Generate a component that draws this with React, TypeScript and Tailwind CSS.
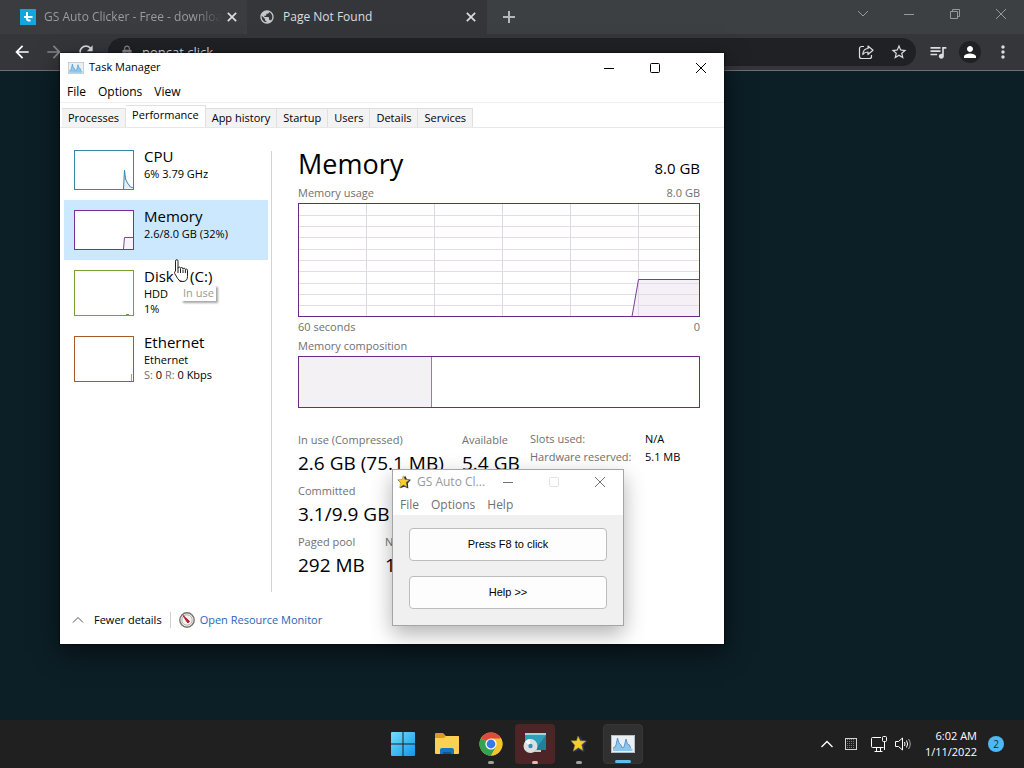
import React, { useState } from "react";
import {
  MdArrowBack,
  MdArrowForward,
  MdLock,
  MdMoreVert,
  MdPerson,
  MdPublic,
  MdQueueMusic,
  MdRefresh,
  MdStarBorder,
} from "react-icons/md";

const tabs = [
  "Processes",
  "Performance",
  "App history",
  "Startup",
  "Users",
  "Details",
  "Services",
];

const CloseIcon = ({ className }: { className?: string }) => (
  <svg className={className} viewBox="0 0 12 12" fill="none" stroke="currentColor">
    <path d="M1 1l10 10M11 1L1 11" />
  </svg>
);

const MinimizeIcon = ({ className }: { className?: string }) => (
  <svg className={className} viewBox="0 0 12 12" fill="none" stroke="currentColor">
    <path d="M1 6.5h10" />
  </svg>
);

const MaximizeIcon = ({ className }: { className?: string }) => (
  <svg className={className} viewBox="0 0 12 12" fill="none" stroke="currentColor">
    <rect x="1.5" y="1.5" width="9" height="9" rx="1" />
  </svg>
);

const StarIcon = ({ className }: { className?: string }) => (
  <svg className={className} viewBox="0 0 18 18">
    <path
      d="M10.500 1l2.200 4 5.300 1-4 4.500.5 7-5-2.500L4 17l1.500-6L1 6.500 6.500 6z"
      fill="#26305c"
    />
    <path
      d="M8 1l2.300 4.700 5.700.3-4.300 3.700 1.200 5.800-4.500-2.700-5.200 3.400 1.600-5.900L1 5.800l5.500-.1z"
      fill="#f6cf2a"
      stroke="#8a7a3c"
      strokeWidth=".5"
    />
  </svg>
);

const TaskManagerIcon = ({ className }: { className?: string }) => (
  <svg className={className} viewBox="0 0 24 20">
    <rect x=".5" y="1.500" width="23" height="17" fill="#e9eff3" stroke="#b3c0ca" />
    <path
      d="M2 17v-3l2-1 1-2 1.500-7 1.500 5 2 2 1 3 2-1 2-8 1.500 5 2 1 1 3 2 1v2z"
      fill="#8cc6ea"
    />
    <path
      d="M2 14l2-1 1-2 1.500-7 1.500 5 2 2 1 3 2-1 2-8 1.500 5 2 1 1 3"
      fill="none"
      stroke="#4189bd"
      strokeWidth=".8"
    />
  </svg>
);

const BrowserWindow = () => (
  <header className="text-[#dcdde0]">
    <div className="flex h-[34px] items-center bg-[#3c4043]">
      <div className="flex h-full w-[247px] items-center rounded-br-lg bg-[#3a3c3f] pl-5 pr-[10px]">
        <svg className="mr-2 h-4 w-4 shrink-0" viewBox="0 0 16 16">
          <rect width="16" height="16" fill="#14a5dd" />
          <path
            d="M7 3v6.500q0 2 2 2h1.500M4 8h8.500"
            fill="none"
            stroke="#fff"
            strokeWidth="2"
          />
        </svg>
        <span className="whitespace-nowrap text-xs text-[#989b9f] [mask-image:linear-gradient(to_right,black_85%,transparent)]">
          GS Auto Clicker - Free - downloa
        </span>
        <button aria-label="Close tab" className="ml-auto">
          <CloseIcon className="h-[10px] w-[10px] stroke-2" />
        </button>
      </div>
      <div className="flex h-full w-[240px] items-center bg-[#35363a] pl-3 pr-[11px]">
        <MdPublic className="mr-2 h-4 w-4 text-[#c4c7ca]" />
        <span className="whitespace-nowrap text-xs">Page Not Found</span>
        <button aria-label="Close tab" className="ml-auto">
          <CloseIcon className="h-[10px] w-[10px] stroke-2" />
        </button>
      </div>
      <button aria-label="New tab" className="ml-4 text-[#b5b8bb]">
        <svg className="h-3 w-3" viewBox="0 0 12 12" stroke="currentColor" strokeWidth="2">
          <path d="M6 0v12M0 6h12" />
        </svg>
      </button>
      <div className="ml-auto flex items-center gap-[34px] pb-[6px] pr-[17px] text-[#97999b]">
        <button aria-label="Search tabs">
          <svg className="h-3 w-3" viewBox="0 0 12 12" fill="none" stroke="currentColor">
            <path d="M1 3l5 5 5-5" />
          </svg>
        </button>
        <button aria-label="Minimize">
          <MinimizeIcon className="h-3 w-3" />
        </button>
        <button aria-label="Restore">
          <svg className="h-3 w-3" viewBox="0 0 12 12" fill="none" stroke="currentColor">
            <path d="M1.500 3.500h7v7h-7zM3.500 3.500v-2h7v7h-2" />
          </svg>
        </button>
        <button aria-label="Close">
          <CloseIcon className="h-3 w-3" />
        </button>
      </div>
    </div>
    <div className="flex h-[37px] items-center border-b border-[#6d7174] bg-[#35363a] pl-3">
      <button aria-label="Back" className="text-white">
        <MdArrowBack className="h-5 w-5" />
      </button>
      <button aria-label="Forward" className="ml-3 text-[#85878a]">
        <MdArrowForward className="h-5 w-5" />
      </button>
      <button aria-label="Reload" className="ml-3">
        <MdRefresh className="h-5 w-5" />
      </button>
      <div className="ml-3 flex h-7 flex-1 items-center rounded-full bg-[#202124] pl-3 pr-2">
        <MdLock className="h-[14px] w-[14px] text-[#85878a]" />
        <input
          aria-label="Address"
          defaultValue="popcat.click"
          className="ml-2 min-w-0 flex-1 bg-transparent text-[13px] leading-5 outline-none"
        />
        <button aria-label="Share" className="mr-4">
          <svg
            className="h-4 w-4"
            viewBox="0 0 16 16"
            fill="none"
            stroke="currentColor"
            strokeWidth="1.2"
            strokeLinejoin="round"
          >
            <path d="M6 2.500H3.500a2 2 0 0 0-2 2v8a2 2 0 0 0 2 2h8a2 2 0 0 0 2-2V11" />
            <path d="M10 2l5 4.300-5 4.200V8c-2.500 0-4 .8-5.200 2.500C5 7 7 4.700 10 4.500z" />
          </svg>
        </button>
        <button aria-label="Bookmark">
          <MdStarBorder className="h-[18px] w-[18px]" />
        </button>
      </div>
      <button aria-label="Media" className="ml-3">
        <MdQueueMusic className="h-5 w-5" />
      </button>
      <button aria-label="Profile" className="ml-[11px] rounded-full bg-[#202124] p-[2px] text-white">
        <MdPerson className="h-[18px] w-[18px]" />
      </button>
      <button aria-label="Menu" className="ml-3 mr-[11px]">
        <MdMoreVert className="h-5 w-5" />
      </button>
    </div>
  </header>
);

type ResourceProps = {
  name: string;
  color: string;
  tall?: boolean;
  selected?: boolean;
  graph: React.ReactNode;
  children: React.ReactNode;
};

const Resource = ({ name, color, tall, selected, graph, children }: ResourceProps) => (
  <button
    className={`flex w-full gap-[10px] px-[10px] pb-[10px] pt-[6px] text-left ${
      selected ? "bg-[#cce8ff]" : ""
    }`}
  >
    <span className={`mt-1 w-[60px] shrink-0 border bg-white ${tall ? "h-[46px]" : "h-10"} ${color}`}>
      <svg className="h-full w-full" viewBox={tall ? "0 0 58 44" : "0 0 58 38"}>
        {graph}
      </svg>
    </span>
    <span className="-mb-2 block whitespace-nowrap text-[11px] leading-[15px]">
      <span className="block text-[15px] leading-5">{name}</span>
      {children}
    </span>
  </button>
);

const MemoryChart = () => (
  <svg className="block h-[114px] w-full" viewBox="0 0 402 114" preserveAspectRatio="none">
    <path d="M334 113.500L340.500 76.500H402V113.500z" fill="#f4f0f6" />
    {[68, 136, 204, 272, 340].map((x) => (
      <path key={x} d={`M${x}.5 0V114`} stroke="#dfd8e3" />
    ))}
    {[12, 23, 34, 46, 57, 68, 80, 91, 102].map((y) => (
      <path key={y} d={`M0 ${y}.5H402`} stroke="#e3dce6" />
    ))}
    <path d="M334 113.500L340.500 76.500H402" fill="none" stroke="#793f98" />
    <rect x=".5" y=".5" width="401" height="113" fill="none" stroke="#6b2a86" />
  </svg>
);

const Stat = ({ label, value }: { label: string; value: string }) => (
  <div className="whitespace-nowrap">
    <dt className="leading-5 text-[#707070]">{label}</dt>
    <dd className="text-[19px] leading-[26px]">{value}</dd>
  </div>
);

const TaskManager = () => {
  const [active, setActive] = useState("Performance");

  return (
    <section className="absolute left-[60px] top-[53px] w-[664px] bg-white text-[11px] text-black shadow-[0_0_2px_#000,0_8px_24px_rgba(0,0,0,0.5)]">
      <div className="flex h-[29px] items-center pl-2 pr-[17px]">
        <TaskManagerIcon className="mr-[5px] h-[14px] w-4" />
        <h1>Task Manager</h1>
        <div className="ml-auto flex gap-[34px]">
          <button aria-label="Minimize">
            <MinimizeIcon className="h-3 w-3" />
          </button>
          <button aria-label="Maximize">
            <MaximizeIcon className="h-3 w-3" />
          </button>
          <button aria-label="Close">
            <CloseIcon className="h-3 w-3" />
          </button>
        </div>
      </div>
      <nav className="flex h-[21px] items-center gap-3 border-b border-[#f0f0f0] px-[7px] text-xs">
        <button>File</button>
        <button>Options</button>
        <button>View</button>
      </nav>
      <div className="flex h-[25px] items-end border-b border-[#e8e8e8] px-[2px]">
        {tabs.map((tab) => (
          <button
            key={tab}
            onClick={() => setActive(tab)}
            className={`border-r border-t border-[#e0e0e0] px-[6px] ${
              active === tab ? "h-[22px] bg-white pb-[3px]" : "h-[19px] bg-[#f3f3f3]"
            }`}
          >
            {tab}
          </button>
        ))}
      </div>

      <div className="flex">
        <aside className="mb-[13px] ml-1 mt-3 w-[204px]">
          <Resource
            name="CPU"
            color="border-[#3587a8]"
            graph={
              <path
                d="M48.500 38l1-19 1 9 2 4 3 4 3 1"
                fill="#e2f1f8"
                stroke="#3587a8"
              />
            }
          >
            6% 3.79 GHz
          </Resource>
          <Resource
            name="Memory"
            color="border-[#7b2f9b]"
            selected
            graph={<path d="M48.500 38l1-11.500H59V38" fill="#f8f3fa" stroke="#7b4a91" />}
          >
            2.6/8.0 GB (32%)
          </Resource>
          <Resource
            name="Disk 0 (C:)"
            color="border-[#76a02f]"
            tall
            graph={<path d="M51 43.500h3" stroke="#76a02f" />}
          >
            <span className="block">HDD</span>
            <span className="block">1%</span>
          </Resource>
          <Resource
            name="Ethernet"
            color="border-[#a75a27]"
            tall
            graph={<path d="M56.500 44v-7" stroke="#e08a6a" />}
          >
            <span className="block">Ethernet</span>
            <span className="block">
              <span className="text-[#707070]">S:</span> 0 <span className="text-[#707070]">R:</span> 0
              Kbps
            </span>
          </Resource>
        </aside>

        <main className="mb-1 ml-[3px] mt-[23px] flex h-[441px] flex-1 flex-col border-l border-[#d4d4d4] pl-[26px] pr-6">
          <div className="-mt-[5px] flex h-9 items-center justify-between">
            <h2 className="text-[27px] leading-9">Memory</h2>
            <span className="pt-2 text-[15px]">8.0 GB</span>
          </div>
          <div className="flex justify-between leading-[21px] text-[#707070]">
            <span>Memory usage</span>
            <span>8.0 GB</span>
          </div>
          <MemoryChart />
          <div className="flex justify-between leading-[19px] text-[#707070]">
            <span>60 seconds</span>
            <span>0</span>
          </div>
          <span className="leading-5 text-[#707070]">Memory composition</span>
          <div className="h-[52px] border border-[#6b2a86]">
            <div className="h-full w-1/3 border-r border-[#ab6fb0] bg-[#f4f1f5]"></div>
          </div>
          <div className="mt-[22px] flex">
            <dl className="w-[232px] shrink-0 space-y-[5px]">
              <div className="flex">
                <div className="w-[164px] shrink-0">
                  <Stat label="In use (Compressed)" value="2.6 GB (75.1 MB)" />
                </div>
                <Stat label="Available" value="5.4 GB" />
              </div>
              <Stat label="Committed" value="3.1/9.9 GB" />
              <div className="flex gap-5">
                <Stat label="Paged pool" value="292 MB" />
                <Stat label="Non-paged pool" value="1" />
              </div>
            </dl>
            <dl className="grid grid-cols-[115px_auto] content-start whitespace-nowrap leading-[18px]">
              <dt className="text-[#707070]">Slots used:</dt>
              <dd>N/A</dd>
              <dt className="text-[#707070]">Hardware reserved:</dt>
              <dd>5.1 MB</dd>
            </dl>
          </div>
        </main>
      </div>

      <footer className="flex h-12 items-center px-3">
        <button className="flex items-center gap-[10px] border-r border-[#d0d0d0] pr-2">
          <svg className="h-3 w-3" viewBox="0 0 12 12" fill="none" stroke="#555">
            <path d="M1 8.500l5-5 5 5" />
          </svg>
          Fewer details
        </button>
        <a href="#" className="ml-2 flex items-center gap-[5px] text-[#1f66b8]">
          <svg className="h-4 w-4" viewBox="0 0 16 16">
            <circle cx="8" cy="8" r="7.200" fill="#f4f2ef" stroke="#77736f" strokeWidth="1.400" />
            <circle cx="8" cy="8" r="5.200" fill="none" stroke="#b8b3ae" />
            <path d="M4 3.500l6.500 5.800-1.700 1.700z" fill="#b3202a" stroke="#b3202a" />
          </svg>
          Open Resource Monitor
        </a>
      </footer>
    </section>
  );
};

const AutoClicker = () => (
  <section className="absolute left-[392px] top-[469px] w-[232px] border border-[#a5a5a5] bg-[#f0f0f0] text-xs text-[#707070] shadow-[0_8px_20px_rgba(0,0,0,0.3)]">
    <div className="flex h-6 items-center bg-white pl-1 pr-[17px]">
      <StarIcon className="mr-[6px] h-[14px] w-[14px] shrink-0" />
      <h1 className="whitespace-nowrap text-[#999]">GS Auto Cl...</h1>
      <div className="ml-auto flex gap-[34px]">
        <button aria-label="Minimize">
          <MinimizeIcon className="h-3 w-3" />
        </button>
        <button aria-label="Maximize" className="text-[#e2e2e2]">
          <MaximizeIcon className="h-3 w-3" />
        </button>
        <button aria-label="Close">
          <CloseIcon className="h-3 w-3" />
        </button>
      </div>
    </div>
    <nav className="flex h-[21px] items-center gap-3 bg-white px-[7px]">
      <button>File</button>
      <button>Options</button>
      <button>Help</button>
    </nav>
    <div className="flex flex-col gap-[15px] p-4 pt-[13px] font-['Liberation_Sans',sans-serif] text-[11px] text-black">
      <button className="h-[33px] rounded border border-[#bdbdbd] bg-[#fdfdfd]">
        Press F8 to click
      </button>
      <button className="h-[33px] rounded border border-[#bdbdbd] bg-[#fdfdfd]">Help &gt;&gt;</button>
    </div>
  </section>
);

const Taskbar = () => (
  <footer className="grid h-12 grid-cols-[1fr_auto_1fr] items-center bg-[#202020] text-[11px] text-white">
    <div></div>
    <div className="flex gap-1 pl-[2px]">
      <button aria-label="Start" className="flex h-10 w-10 items-center justify-center">
        <svg className="h-6 w-6" viewBox="0 0 24 24">
          <defs>
            <linearGradient id="start" x1="0" y1="0" x2="1" y2="1">
              <stop offset="0" stopColor="#6fe0fb" />
              <stop offset="1" stopColor="#1595ec" />
            </linearGradient>
          </defs>
          <path
            d="M0 1q0-1 1-1h10.500v11.500H0zM12.500 0H23q1 0 1 1v10.500H12.500zM0 12.500h11.500V24H1q-1 0-1-1zM12.500 12.500H24V23q0 1-1 1H12.500z"
            fill="url(#start)"
          />
        </svg>
      </button>
      <button aria-label="File Explorer" className="flex h-10 w-10 items-center justify-center">
        <svg className="h-6 w-6" viewBox="0 0 24 24">
          <path d="M0 2q0-1 1-1h7l3 3h12q1 0 1 1v6H0z" fill="#d99e19" />
          <path d="M0 6h9l2-2h12q1 0 1 1v16q0 1-1 1H1q-1 0-1-1z" fill="#fbd153" />
          <path d="M5 22v-4q0-2 2-2h10q2 0 2 2v4z" fill="#1676c5" />
          <path d="M8 22v-2h8v2z" fill="#0e5799" />
        </svg>
      </button>
      <button aria-label="Chrome" className="flex h-10 w-10 flex-col items-center justify-between pt-2">
        <svg className="h-6 w-6 shrink-0" viewBox="0 0 24 24">
          <circle cx="12" cy="12" r="11.500" fill="#f4c42f" />
          <path d="M12 12L2.040 6.250a11.500 11.500 0 0 1 19.920 0z" fill="#e2493b" />
          <path d="M2.040 6.250A11.500 11.500 0 0 0 12 23.500l5-8.600-5-2.900z" fill="#35a252" />
          <path d="M12 6.500h10.100a11.500 11.500 0 0 1-10.100 17l5-8.600z" fill="#f4c42f" />
          <circle cx="12" cy="12" r="5.600" fill="#fff" />
          <circle cx="12" cy="12" r="4.400" fill="#3979e4" />
        </svg>
        <span className="h-[3px] w-[6px] rounded-full bg-[#a0a0a0]"></span>
      </button>
      <button
        aria-label="Installer"
        className="flex h-10 w-10 flex-col items-center justify-between rounded bg-[#4d2526] pt-2"
      >
        <svg className="h-6 w-6 shrink-0" viewBox="0 0 24 24">
          <rect x="2" y="1" width="21" height="17" fill="#2d9fb8" />
          <path d="M2 1h21v2H2z" fill="#98d9e6" />
          <path d="M23 3v15H12z" fill="#20809c" />
          <circle cx="7.500" cy="14" r="7" fill="#dbe0e3" />
          <path d="M7.500 14L2 9.700A7 7 0 0 1 7 7z" fill="#fff" />
          <circle cx="7.500" cy="14" r="2.200" fill="#3c91ad" />
          <path d="M12 18h6v2h-7z" fill="#c5ced3" />
        </svg>
        <span className="h-[3px] w-[6px] rounded-full bg-[#f5b0b0]"></span>
      </button>
      <button aria-label="GS Auto Clicker" className="flex h-10 w-10 flex-col items-center justify-between pt-[11px]">
        <StarIcon className="h-[18px] w-[18px] shrink-0" />
        <span className="h-[3px] w-[6px] rounded-full bg-[#a0a0a0]"></span>
      </button>
      <button
        aria-label="Task Manager"
        className="flex h-10 w-10 flex-col items-center justify-between rounded border border-[#373737] bg-[#303030] pt-[9px]"
      >
        <TaskManagerIcon className="h-5 w-6 shrink-0" />
        <span className="h-[3px] w-4 rounded-full bg-[#60bce9]"></span>
      </button>
    </div>
    <div className="flex items-center justify-end pr-5">
      <button aria-label="Show hidden icons">
        <svg className="h-3 w-3" viewBox="0 0 12 12" fill="none" stroke="currentColor" strokeWidth="1.300">
          <path d="M.5 9L6 3.500 11.500 9" />
        </svg>
      </button>
      <svg className="ml-3 h-3 w-3" viewBox="0 0 12 12" fill="none" stroke="currentColor">
        <path d="M2.500 1v10M4.500 1v10M6.500 1v10M8.500 1v10" stroke="#777" strokeDasharray="1 1" />
        <rect x=".5" y=".5" width="11" height="11" strokeOpacity=".8" />
      </svg>
      <svg className="ml-[14px] h-4 w-4" viewBox="0 0 16 16" fill="none" stroke="currentColor">
        <path d="M10 1.500H1.500Q.5 1.500.5 2.500v8q0 1 1 1h11M3.500 15.500h8M5.500 11.500v4M9.500 11.500v4M13.500 5v9" />
        <rect x="11.500" y=".5" width="4" height="5" rx="1" />
      </svg>
      <svg className="ml-2 h-4 w-4" viewBox="0 0 16 16" fill="none" stroke="currentColor">
        <path d="M.5 5.500h3L7.500 2v12l-4-3.500h-3zM9.500 6q1 2 0 4M11.500 4.500q2.200 3.500 0 7" />
        <path d="M13.500 3q3.500 5 0 10" strokeOpacity=".6" />
      </svg>
      <div className="ml-[14px] whitespace-nowrap text-right leading-4">
        <p>6:02 AM</p>
        <p>1/11/2022</p>
      </div>
      <span className="ml-[11px] flex h-4 w-4 items-center justify-center rounded-full bg-[#4cb9f5] text-[10px] text-[#12303f]">
        2
      </span>
    </div>
  </footer>
);

const App = () => {
  return (
    <div className="relative flex min-h-screen flex-col overflow-hidden bg-[#0c1e26] font-['Open_Sans','Noto_Sans',sans-serif]">
      <BrowserWindow />
      <div className="flex-1"></div>
      <Taskbar />

      <TaskManager />
      <AutoClicker />

      {/* Tooltip and pointer */}
      <div className="absolute left-[181px] top-[285px] bg-white px-[2px] text-[11px] leading-4 text-[#999] shadow-[2px_2px_2px_rgba(0,0,0,0.35)]">
        In use
      </div>
      <svg className="absolute left-[174px] top-[259px] h-6 w-[14px]" viewBox="0 0 14 24">
        <path
          d="M1.500 2.200Q1.500.7 2.800.7T4 2.200v7q.2-1.200 1.300-1.200t1.200 1.500q.2-1 1.300-1T9 10q.2-.8 1.200-.8t1.200 1.500q.3-.7 1.100-.7t1 1.200v6.300q0 5-4.700 5-3.300 0-5-2.700L.7 14.500Q0 13 1.500 12z"
          fill="#fff"
          stroke="#222"
        />
        <path d="M4 9v5M6.500 10v4M9 10.500V14M11.400 11v3" stroke="#222" />
      </svg>
    </div>
  );
};

export default App;
